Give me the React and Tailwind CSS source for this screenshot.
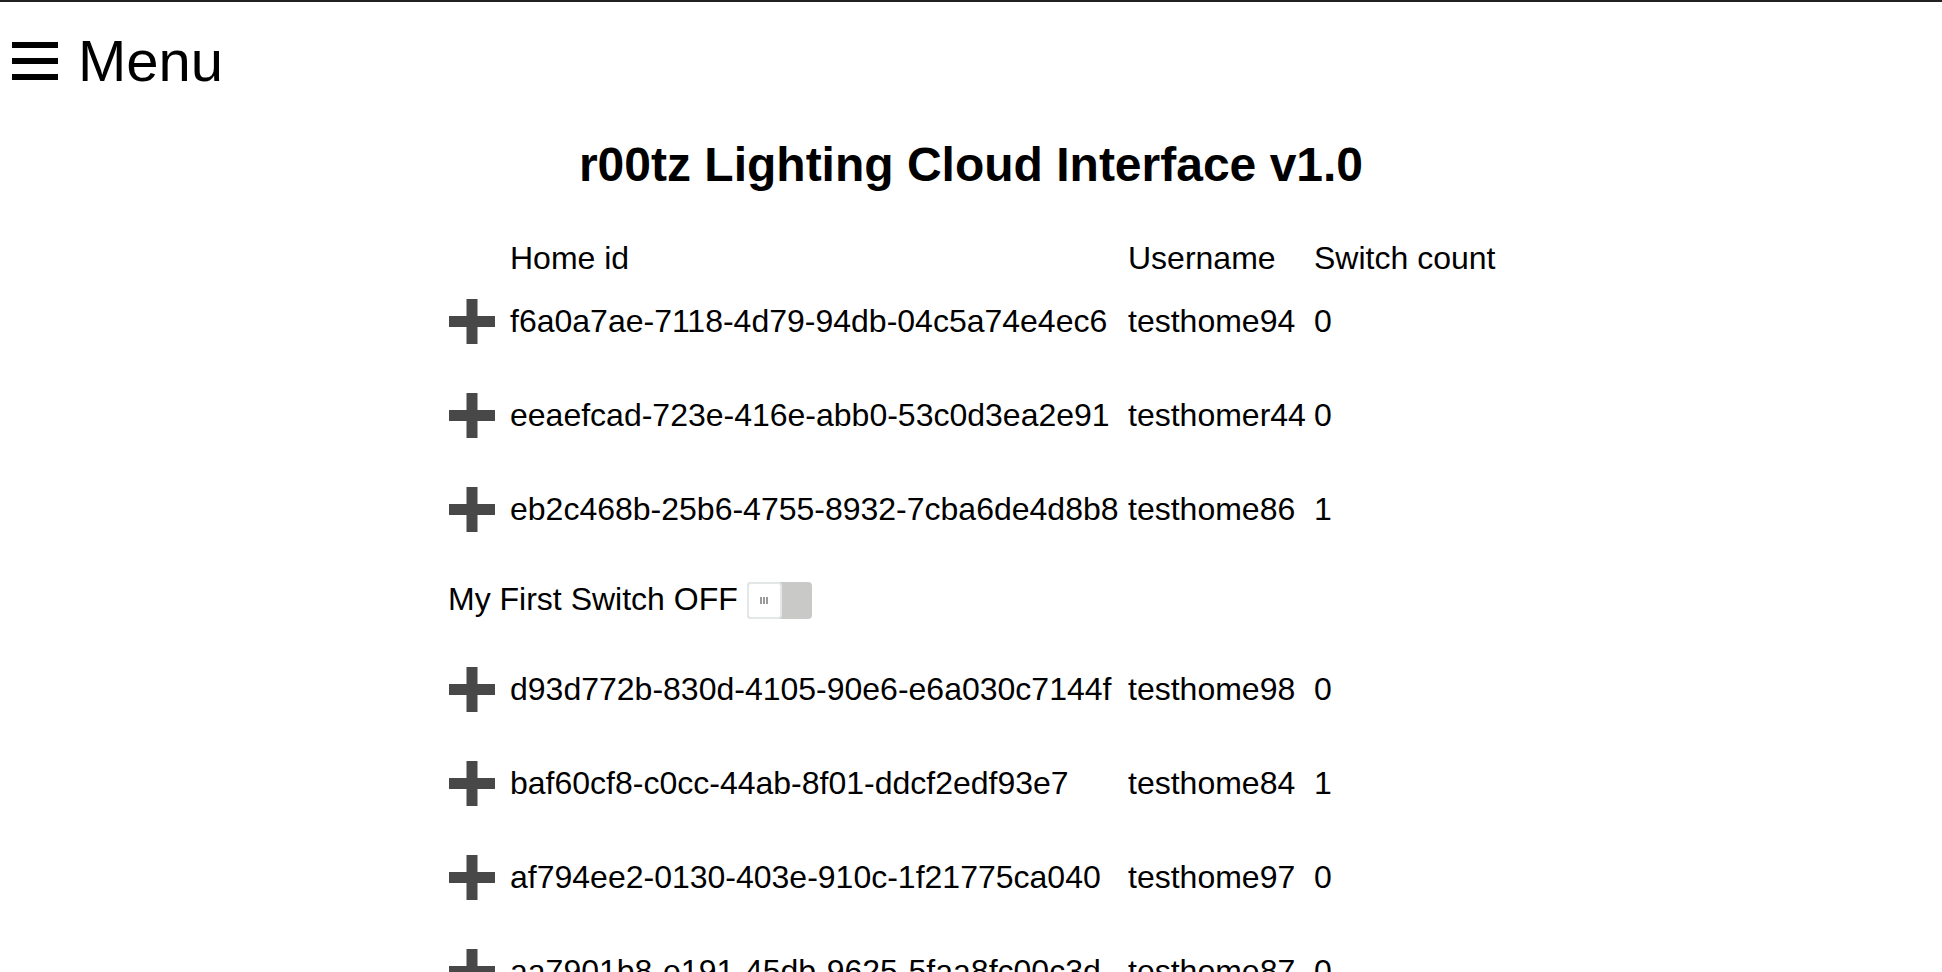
import React from 'react';

const homes = [
  { id: 'f6a0a7ae-7118-4d79-94db-04c5a74e4ec6', username: 'testhome94', count: 0 },
  { id: 'eeaefcad-723e-416e-abb0-53c0d3ea2e91', username: 'testhomer44', count: 0 },
  {
    id: 'eb2c468b-25b6-4755-8932-7cba6de4d8b8',
    username: 'testhome86',
    count: 1,
    switches: [{ name: 'My First Switch', on: false }],
  },
  { id: 'd93d772b-830d-4105-90e6-e6a030c7144f', username: 'testhome98', count: 0 },
  { id: 'baf60cf8-c0cc-44ab-8f01-ddcf2edf93e7', username: 'testhome84', count: 1 },
  { id: 'af794ee2-0130-403e-910c-1f21775ca040', username: 'testhome97', count: 0 },
  { id: 'aa7901b8-e191-45db-9625-5faa8fc00c3d', username: 'testhome87', count: 0 },
];

const PlusIcon = () => (
  <svg width="46" height="45" viewBox="0 0 46 45" className="block">
    <rect x="17.5" y="0" width="11" height="45" fill="#484848" />
    <rect x="0" y="17" width="46" height="11" fill="#484848" />
  </svg>
);

const Toggle = ({ on }) => (
  <span className="inline-flex w-[65px] h-[37px] rounded-[4px] bg-[#c9cac8] align-middle">
    <span className="flex items-center justify-center gap-[1px] w-[35px] h-full bg-white border-2 border-[#e4e7e7] rounded-[4px]">
      <span className="w-[2px] h-[7px] bg-[#9a9a9a]" />
      <span className="w-[2px] h-[7px] bg-[#9a9a9a]" />
      <span className="w-[2px] h-[7px] bg-[#9a9a9a]" />
    </span>
  </span>
);

const HomeRow = ({ home }) => (
  <div className="grid grid-cols-[64px_618px_186px_1fr] items-center h-[94px]">
    <div className="pl-[3px]">
      <PlusIcon />
    </div>
    <div>{home.id}</div>
    <div>{home.username}</div>
    <div>{home.count}</div>
  </div>
);

export default function App() {
  return (
    <div className="min-h-screen bg-white text-black font-['Liberation_Sans',Arial,sans-serif] border-t-2 border-[#222]">
      <div className="flex items-center h-[66px] mt-[26px] pl-[12px]">
        <span className="flex flex-col gap-[10px] w-[46px]">
          <span className="h-[6px] bg-black" />
          <span className="h-[6px] bg-black" />
          <span className="h-[6px] bg-black" />
        </span>
        <span className="ml-[20px] text-[58px] leading-[66px]">Menu</span>
      </div>

      <h1 className="mt-[43px] text-center text-[48px] leading-[56px] font-bold">
        r00tz Lighting Cloud Interface v1.0
      </h1>

      <div className="mx-auto w-[1050px] mt-[47px] text-[32px] leading-[37px]">
        <div className="grid grid-cols-[64px_618px_186px_1fr] items-center h-[34px]">
          <div />
          <div>Home id</div>
          <div>Username</div>
          <div>Switch count</div>
        </div>
        {homes.map((home) => (
          <React.Fragment key={home.id}>
            <HomeRow home={home} />
            {home.switches &&
              home.switches.map((sw) => (
                <div key={sw.name} className="flex items-center h-[86px] pl-[2px]">
                  <span>
                    {sw.name} {sw.on ? 'ON' : 'OFF'}
                  </span>
                  <span className="ml-[9px]">
                    <Toggle on={sw.on} />
                  </span>
                </div>
              ))}
          </React.Fragment>
        ))}
      </div>
    </div>
  );
}
